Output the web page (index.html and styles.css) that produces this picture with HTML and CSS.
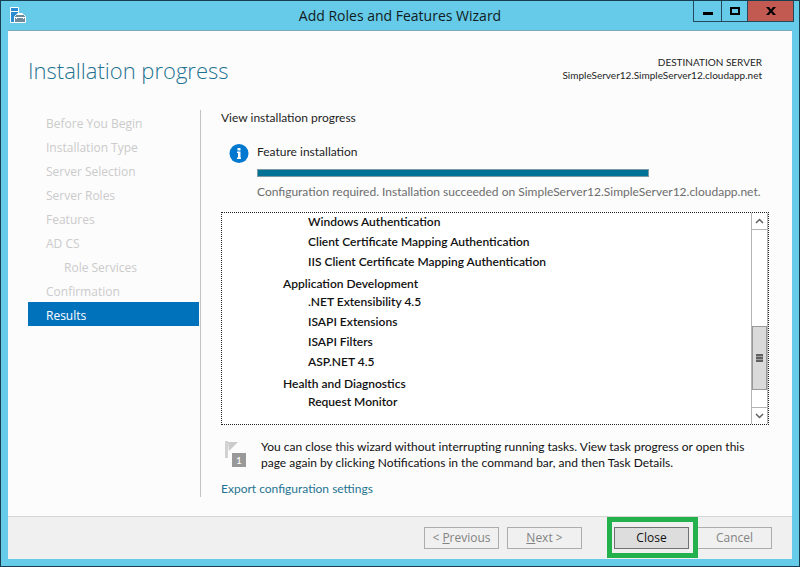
FILE: index.html
```html
<!DOCTYPE html>
<html lang="en">
  <head>
    <meta charset="UTF-8" />
    <title>Add Roles and Features Wizard</title>
    <link rel="stylesheet" href="styles.css">
  </head>
  <body>
    <div class="window">
      <header class="titlebar">
        <svg class="app-icon" width="16" height="16" viewBox="0 0 16 16">
          <path d="M.5.5h8v15h-8z" fill="#2b8bd0" stroke="#fff" />
          <path d="M1 4.500h7" stroke="#fff" />
          <path d="M4.500 15.500v-6l2-2h7l2 2v6z" fill="#6f8b9b" stroke="#fff" />
          <path d="M7.500 7.500v-1h5v1M5 10.500h10M6.500 10v2M13.500 10v2" fill="none" stroke="#fff" />
        </svg>
        <h1>Add Roles and Features Wizard</h1>
        <div class="controls">
          <button type="button" class="minimize" aria-label="Minimize">
            <svg width="10" height="10" viewBox="0 0 10 10"><path d="M0 6h10v3H0z" /></svg>
          </button>
          <button type="button" class="maximize" aria-label="Maximize">
            <svg width="10" height="10" viewBox="0 0 10 10"><path d="M0 1h10v8H0zM2 3v4h6V3z" fill-rule="evenodd" /></svg>
          </button>
          <button type="button" class="exit" aria-label="Close window">
            <svg width="10" height="10" viewBox="0 0 10 10"><path d="M0 1h3l2 2.500L7 1h3L6.500 5 10 9H7L5 6.500 3 9H0l3.500-4z" /></svg>
          </button>
        </div>
      </header>

      <div class="page">
        <div class="page-header">
          <h2>Installation progress</h2>
          <p class="destination">DESTINATION SERVER<br />SimpleServer12.SimpleServer12.cloudapp.net</p>
        </div>

        <div class="columns">
          <nav class="steps">
            <ul>
              <li>Before You Begin</li>
              <li>Installation Type</li>
              <li>Server Selection</li>
              <li>Server Roles</li>
              <li>Features</li>
              <li>AD CS</li>
              <li class="sub">Role Services</li>
              <li>Confirmation</li>
              <li class="current">Results</li>
            </ul>
          </nav>

          <main>
            <p>View installation progress</p>

            <div class="status">
              <svg class="info" width="20" height="20" viewBox="0 0 20 20">
                <circle cx="10" cy="9.500" r="9.500" fill="#0078d0" />
                <path d="M8.500 4h3v2.500h-3zM8 7.500h3.500v6h.5V15H8v-1.500h1V9H8z" fill="#fff" />
              </svg>
              <div class="status-body">
                <label for="progress">Feature installation</label>
                <progress id="progress" value="100" max="100"></progress>
                <p class="message">Configuration required. Installation succeeded on SimpleServer12.SimpleServer12.cloudapp.net.</p>
              </div>
            </div>

            <div class="results">
              <div class="results-list">
                <ul>
                  <li>Windows Authentication</li>
                  <li>Client Certificate Mapping Authentication</li>
                  <li>IIS Client Certificate Mapping Authentication</li>
                </ul>
                <h3>Application Development</h3>
                <ul>
                  <li>.NET Extensibility 4.5</li>
                  <li>ISAPI Extensions</li>
                  <li>ISAPI Filters</li>
                  <li>ASP.NET 4.5</li>
                </ul>
                <h3>Health and Diagnostics</h3>
                <ul>
                  <li>Request Monitor</li>
                </ul>
              </div>
              <div class="scrollbar">
                <button type="button" class="arrow up" aria-label="Scroll up">
                  <svg width="9" height="6" viewBox="0 0 9 6"><path d="M1 5l3.500-3.500L8 5" /></svg>
                </button>
                <div class="track">
                  <div class="thumb"></div>
                </div>
                <button type="button" class="arrow down" aria-label="Scroll down">
                  <svg width="9" height="6" viewBox="0 0 9 6"><path d="M1 1l3.500 3.500L8 1" /></svg>
                </button>
              </div>
            </div>

            <div class="note">
              <div class="flag">
                <svg width="14" height="20" viewBox="0 0 14 20">
                  <path d="M0 2h3v17H0z" fill="#d2d2d2" />
                  <path d="M3 3h10L4 12z" fill="#cbcbcb" />
                </svg>
                <span class="badge">1</span>
              </div>
              <p>You can close this wizard without interrupting running tasks. View task progress or open this page again by clicking Notifications in the command bar, and then Task Details.</p>
            </div>

            <a class="export" href="#">Export configuration settings</a>
          </main>
        </div>

        <footer>
          <button type="button" disabled>&lt; <u>P</u>revious</button>
          <button type="button" disabled><u>N</u>ext &gt;</button>
          <div class="highlight">
            <button type="button" class="primary">Close</button>
          </div>
          <button type="button" disabled>Cancel</button>
        </footer>
      </div>
    </div>
  </body>
</html>
```

FILE: styles.css
```css
* {
  box-sizing: border-box;
  padding: 0;
  margin: 0;
}

body {
  font-family: "Open Sans", "Noto Sans", sans-serif;
  font-size: 12px;
  line-height: 16px;
  color: #1e1e1e;
}

ul {
  list-style: none;
}

button {
  font: inherit;
}

.window {
  display: flex;
  flex-direction: column;
  min-height: 100vh;
  padding: 0 7px 7px;
  border: 1px solid #173f50;
  background-color: #66cae9;
}

/* title bar */
.titlebar {
  display: grid;
  grid-template-columns: 99px 1fr 99px;
  height: 29px;
}

.app-icon {
  margin: 6px 2px;
}

.titlebar h1 {
  font-size: 14px;
  font-weight: 400;
  line-height: 30px;
  text-align: center;
  color: #101c22;
}

.controls {
  display: flex;
  height: 21px;
  margin-right: -2px;
}

.controls button {
  display: flex;
  justify-content: center;
  align-items: center;
  border: 1px solid #25495a;
  border-top: 0;
  background-color: #66cae9;
}

.controls .minimize {
  width: 29px;
}

.controls .maximize {
  width: 26px;
  border-left: 0;
}

.controls .exit {
  flex: 1;
  border-left: 0;
  background-color: #c35a51;
}

/* page */
.page {
  display: flex;
  flex-direction: column;
  flex: 1;
  border-top: 1px solid #7fa9b8;
  background-color: #fcfcfc;
}

.page-header {
  display: flex;
  justify-content: space-between;
  height: 79px;
  padding: 24px 30px 0 20px;
}

.page-header h2 {
  font-size: 22px;
  font-weight: 300;
  line-height: 30px;
  color: #1f7391;
}

.destination {
  font-family: Lato, "Open Sans", sans-serif;
  font-size: 10px;
  line-height: 13px;
  padding-top: 1px;
  text-align: right;
}

.columns {
  display: flex;
  flex: 1;
  padding: 0 23px 19px 20px;
}

.steps {
  flex: 0 0 173px;
  padding-right: 1px;
  border-right: 1px solid #c3c3c3;
}

.steps li {
  padding-left: 18px;
  line-height: 24px;
  padding-top: 2px;
  height: 24px;
  color: #cbcbcb;
}

.steps .sub {
  padding-left: 36px;
}

.steps .current {
  background-color: #0072bc;
  color: #fff;
}

main {
  flex: 1;
  min-width: 0;
  padding-left: 20px;
  font-family: Lato, "Open Sans", sans-serif;
}

.status {
  display: flex;
  gap: 8px;
  padding: 18px 0 12px 8px;
}

.status-body {
  flex: 1;
  min-width: 0;
}

.status label {
  display: block;
}

progress {
  display: block;
  appearance: none;
  width: 392px;
  height: 8px;
  margin: 9px 0 7px;
  border: 1px solid #7d9aa3;
}

progress::-webkit-progress-bar {
  background-color: #e6e6e6;
}

progress::-webkit-progress-value {
  background-color: #007295;
}

.message {
  white-space: nowrap;
  color: #6d6d6d;
}

/* results box */
.results {
  display: flex;
  height: 213px;
  border: 1px dotted #222;
  background-color: #fff;
}

/* scrolled down, so the first row sits tight against the top edge */
.results-list {
  flex: 1;
  overflow: hidden;
  padding-left: 61px;
  font-weight: 600;
  color: #111;
}

.results-list ul:first-child {
  margin-top: -1px;
}

.results-list li {
  padding-left: 25px;
  line-height: 20px;
}

.results-list h3 {
  padding-top: 4px;
  font-size: 12px;
  font-weight: 600;
  line-height: 16px;
}

.scrollbar {
  display: flex;
  flex-direction: column;
  width: 17px;
  border: 1px solid #b4b4b4;
  border-width: 0 1px;
}

.arrow {
  display: flex;
  justify-content: center;
  align-items: center;
  height: 17px;
  border: 0 solid #b4b4b4;
  background-color: #fff;
}

.arrow.up {
  border-bottom-width: 1px;
}

.arrow.down {
  border-top-width: 1px;
}

.arrow path {
  fill: none;
  stroke: #606060;
  stroke-width: 1.5;
}

.track {
  display: flex;
  flex-direction: column;
  justify-content: flex-end;
  flex: 1;
  padding-bottom: 17px;
}

.thumb {
  height: 64px;
  border: 1px solid #999;
  background: linear-gradient(#606060 2px, #a0a0a0 2px 3px, #606060 3px 5px, #a0a0a0 5px 6px, #606060 6px) center / 7px 8px no-repeat #dadada;
}

/* note */
.note {
  display: flex;
  gap: 15px;
  padding: 14px 0 10px 4px;
}

.note p {
  color: #111;
}

.flag {
  position: relative;
  flex: 0 0 21px;
}

.badge {
  position: absolute;
  top: 14px;
  left: 7px;
  width: 14px;
  height: 14px;
  background-color: #999;
  font-size: 10px;
  line-height: 14px;
  text-align: center;
  color: #fff;
}

.export {
  display: inline-block;
  text-decoration: none;
  color: #1f7391;
}

/* footer */
footer {
  display: flex;
  justify-content: flex-end;
  gap: 8px;
  padding: 10px 20px;
  border-top: 1px solid #d6d6d6;
  background-color: #f0f0f0;
}

footer button {
  width: 75px;
  height: 22px;
  border: 1px solid #adadad;
  background-color: #f0f0f0;
  color: #838383;
}

footer .primary {
  border-color: #707070;
  background-color: #ddd;
  color: #111;
}

.highlight {
  position: relative;
  margin-left: 24px;
}

.highlight::after {
  content: "";
  position: absolute;
  inset: -10px -9px -9px -7px;
  border: 5px solid #22b14c;
  pointer-events: none;
}
```
